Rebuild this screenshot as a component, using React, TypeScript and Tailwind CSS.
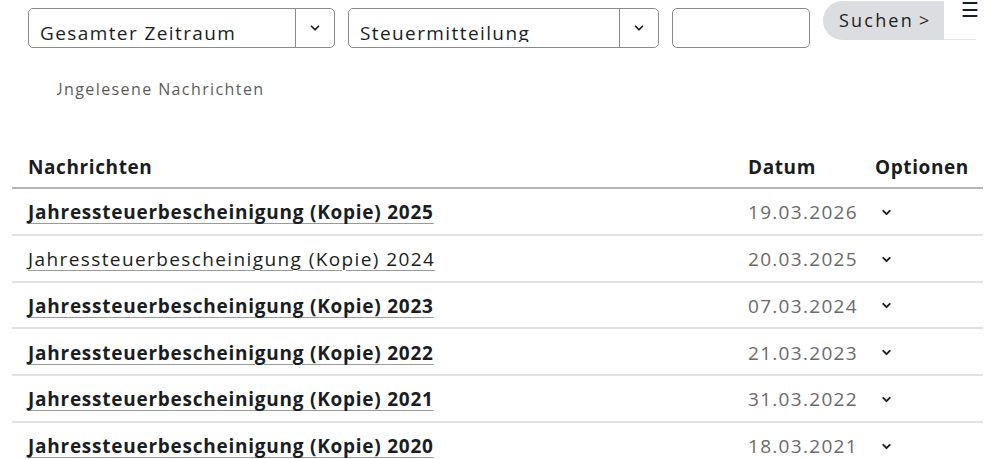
import { ChevronDown } from "lucide-react";

const ROWS = [
  { title: "Jahressteuerbescheinigung (Kopie) 2025", date: "19.03.2026", unread: true },
  { title: "Jahressteuerbescheinigung (Kopie) 2024", date: "20.03.2025", unread: false },
  { title: "Jahressteuerbescheinigung (Kopie) 2023", date: "07.03.2024", unread: true },
  { title: "Jahressteuerbescheinigung (Kopie) 2022", date: "21.03.2023", unread: true },
  { title: "Jahressteuerbescheinigung (Kopie) 2021", date: "31.03.2022", unread: true },
  { title: "Jahressteuerbescheinigung (Kopie) 2020", date: "18.03.2021", unread: true },
];

function SelectBox({ label, width }: { label: string; width: string }) {
  return (
    <div className={`${width} h-[40px] mt-[7px] border border-[#8a8a8a] rounded-[5px] flex overflow-hidden`}>
      <div className="flex-1 h-[33px] overflow-hidden pl-[11px] pt-[12px]">
        <span className="block text-[19px] leading-[25px] text-[#1a1d21] tracking-[1.4px]">{label}</span>
      </div>
      <div className="w-[39px] border-l border-[#8a8a8a] flex items-center justify-center">
        <ChevronDown size={14} strokeWidth={3} className="text-[#1a1d21]" />
      </div>
    </div>
  );
}

export default function App() {
  return (
    <div className="w-[999px] h-[459px] bg-white overflow-hidden font-['Open_Sans',sans-serif] text-[#1a1d21]">
      {/* Filter bar */}
      <div className="flex items-start gap-[13px] pl-[28px] pt-[1px]">
        <SelectBox label="Gesamter Zeitraum" width="w-[307px]" />
        <SelectBox label="Steuermitteilung" width="w-[311px]" />
        <div className="w-[138px] h-[40px] mt-[7px] border border-[#8a8a8a] rounded-[5px]" />
        <div className="relative">
          <button className="w-[150px] h-[39px] rounded-full bg-[#dcdde0] flex items-center pl-[16px] text-[18px] tracking-[2.2px] text-[#1a1d21]">
            Suchen
            <span className="ml-[5px]">&gt;</span>
          </button>
          <div className="absolute left-[121px] top-[-1px] w-[32px] h-[40px] bg-white border-b border-[#e6e6e6] flex justify-end">
            <span className="text-[20px] leading-[20px] -mr-[3px]">☰</span>
          </div>
        </div>
      </div>

      {/* Unread filter */}
      <div className="mt-[29px] ml-[57px] w-[230px] overflow-hidden">
        <span className="block -ml-[6px] text-[16px] leading-[24px] text-[#5c5c5c] tracking-[1.4px]">
          Ungelesene Nachrichten
        </span>
      </div>

      {/* Table */}
      <div className="mx-[12px] w-[971px] mt-[44px]">
        <div className="grid grid-cols-[1fr_127px_108px] h-[44px] items-center border-b-2 border-[#b4b4b4] text-[19px] font-bold tracking-[0.6px]">
          <span className="pl-[16px] pt-[2px]">Nachrichten</span>
          <span className="pt-[2px]">Datum</span>
          <span className="pt-[2px]">Optionen</span>
        </div>
        {ROWS.map((row) => (
          <div
            key={row.title}
            className="grid grid-cols-[1fr_127px_108px] h-[46.8px] items-center border-b-2 border-[#e2e2e2]"
          >
            <span
              className={`pl-[16px] pt-[2px] text-[19px] underline decoration-[#9a9a9a] decoration-1 underline-offset-[4px] ${
                row.unread ? "font-bold tracking-[0.75px]" : "font-normal tracking-[1.4px]"
              }`}
            >
              {row.title}
            </span>
            <span className="pt-[2px] text-[19px] text-[#6a6a6a] tracking-[1.3px]">{row.date}</span>
            <span className="pl-[5px] pt-[2px]">
              <ChevronDown size={13} strokeWidth={3.5} className="text-[#1a1d21]" />
            </span>
          </div>
        ))}
      </div>
    </div>
  );
}
